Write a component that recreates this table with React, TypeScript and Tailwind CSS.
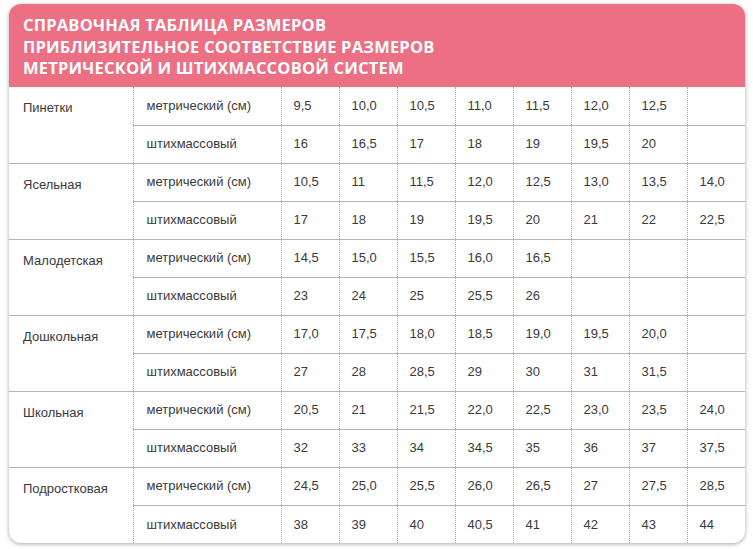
const groups: {name: string; metric: string[]; stich: string[]}[] = [
  {
    name: 'Пинетки',
    metric: ['9,5', '10,0', '10,5', '11,0', '11,5', '12,0', '12,5', ''],
    stich: ['16', '16,5', '17', '18', '19', '19,5', '20', ''],
  },
  {
    name: 'Ясельная',
    metric: ['10,5', '11', '11,5', '12,0', '12,5', '13,0', '13,5', '14,0'],
    stich: ['17', '18', '19', '19,5', '20', '21', '22', '22,5'],
  },
  {
    name: 'Малодетская',
    metric: ['14,5', '15,0', '15,5', '16,0', '16,5', '', '', ''],
    stich: ['23', '24', '25', '25,5', '26', '', '', ''],
  },
  {
    name: 'Дошкольная',
    metric: ['17,0', '17,5', '18,0', '18,5', '19,0', '19,5', '20,0', ''],
    stich: ['27', '28', '28,5', '29', '30', '31', '31,5', ''],
  },
  {
    name: 'Школьная',
    metric: ['20,5', '21', '21,5', '22,0', '22,5', '23,0', '23,5', '24,0'],
    stich: ['32', '33', '34', '34,5', '35', '36', '37', '37,5'],
  },
  {
    name: 'Подростковая',
    metric: ['24,5', '25,0', '25,5', '26,0', '26,5', '27', '27,5', '28,5'],
    stich: ['38', '39', '40', '40,5', '41', '42', '43', '44'],
  },
]

function Cells({values}: {values: string[]}) {
  return (
    <>
      {values.map((v, i) => (
        <td key={i} className="h-[38px] border-l border-dotted border-l-[#a8a8a8] pl-3 align-middle">
          {v}
        </td>
      ))}
    </>
  )
}

export default function App() {
  return (
    <div className="min-h-[549px] w-[753px] bg-white pt-[4px] pl-[9px]">
      <div className="w-[736px] overflow-hidden rounded-[12px] bg-white shadow-[0_1px_4px_rgba(0,0,0,0.35)]">
        <div className="h-[83px] bg-[#ec6f84] pt-[10px] pl-[14px] font-['Open_Sans',sans-serif] text-[16.5px] leading-[21.5px] font-bold tracking-[0.2px] text-white uppercase">
          <div>Справочная таблица размеров</div>
          <div>Приблизительное соответствие размеров</div>
          <div>метрической и штихмассовой систем</div>
        </div>
        <table className="w-full table-fixed border-collapse font-['Liberation_Sans',Arial,sans-serif] text-[13px] text-[#3a3a3a]">
          <colgroup>
            <col className="w-[124px]" />
            <col className="w-[148px]" />
            {Array.from({length: 8}).map((_, i) => (
              <col key={i} className="w-[58px]" />
            ))}
          </colgroup>
          <tbody>
            {groups.map((g, gi) => (
              <>
                <tr key={g.name + 'm'} className={gi > 0 ? 'border-t border-[#b4b4b4]' : ''}>
                  <td rowSpan={2} className="pt-[11px] pl-[14px] align-top">
                    {g.name}
                  </td>
                  <td className="h-[38px] border-l border-dotted border-l-[#a8a8a8] pl-[13px] align-middle">
                    метрический (см)
                  </td>
                  <Cells values={g.metric} />
                </tr>
                <tr key={g.name + 's'} className="border-t border-[#b4b4b4]">
                  <td className="h-[38px] border-l border-dotted border-l-[#a8a8a8] pl-[13px] align-middle">
                    штихмассовый
                  </td>
                  <Cells values={g.stich} />
                </tr>
              </>
            ))}
          </tbody>
        </table>
      </div>
    </div>
  )
}
